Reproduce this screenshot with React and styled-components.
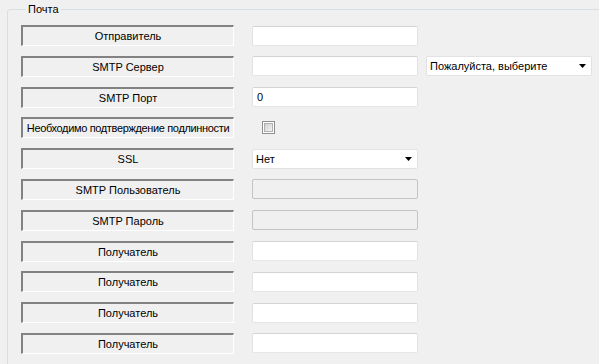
import styled, { createGlobalStyle } from "styled-components";

const GlobalStyle = createGlobalStyle`
  html, body {
    margin: 0;
    background: #f0f0f0;
    overflow: hidden;
  }
  body {
    font-family: "Liberation Sans", Arial, sans-serif;
    font-size: 11px;
    color: #000;
  }
`;

const rows = [
    {label: "Отправитель", field: "text"},
    {label: "SMTP Сервер", field: "text", extra: "Пожалуйста, выберите"},
    {label: "SMTP Порт", field: "text", value: "0"},
    {label: "Необходимо подтверждение подлинности", field: "check", tight: true},
    {label: "SSL", field: "select", value: "Нет"},
    {label: "SMTP Пользователь", field: "disabled"},
    {label: "SMTP Пароль", field: "disabled"},
    {label: "Получатель", field: "text"},
    {label: "Получатель", field: "text"},
    {label: "Получатель", field: "text"},
    {label: "Получатель", field: "text"},
]

function Arrow() {
    return (
        <svg width="7" height="4" viewBox="0 0 7 4">
            <polygon points="0,0 7,0 3.5,4" fill="#000"/>
        </svg>
    )
}

function App() {
    return (
        <>
            <GlobalStyle/>
            <Group>
                <Legend>Почта</Legend>
                <Form>
                    {
                        rows.map((row, i) => {
                            const {label, field, value, extra, tight} = row;
                            return (
                                <Row key={i}>
                                    <Label $tight={tight}>{label}</Label>
                                    {field === "text" && <TextBox>{value}</TextBox>}
                                    {field === "disabled" && <TextBox $disabled/>}
                                    {field === "check" && <CheckBox><span/></CheckBox>}
                                    {field === "select" && (
                                        <Combo>
                                            <span>{value}</span>
                                            <Arrow/>
                                        </Combo>
                                    )}
                                    {extra && (
                                        <Combo $wide>
                                            <span>{extra}</span>
                                            <Arrow/>
                                        </Combo>
                                    )}
                                </Row>
                            )
                        })
                    }
                </Form>
            </Group>
        </>
    );
}

const Group = styled.fieldset`
    box-sizing: border-box;
    width: 620px;
    margin: 3px 0 0 7px;
    padding: 0 0 20px 13px;
    border: 1px solid #d5dfe5;
    border-radius: 3px;
`

const Legend = styled.legend`
    margin-left: 5px;
    padding: 0 2px;
    line-height: 13px;
`

const Form = styled.div`
    display: flex;
    flex-direction: column;
    gap: 9.8px;
    padding-top: 9px;
`

const Row = styled.div`
    display: flex;
    align-items: center;
    height: 21px;
`

const Label = styled.div`
    box-sizing: border-box;
    width: 213px;
    height: 21px;
    margin-right: 18px;
    display: flex;
    align-items: center;
    justify-content: center;
    white-space: nowrap;
    overflow: hidden;
    letter-spacing: ${props => props.$tight ? "-0.35px" : "0"};
    border-top: 2px solid #828282;
    border-left: 2px solid #828282;
    border-right: 1px solid #fff;
    border-bottom: 1px solid #fff;
`

const TextBox = styled.div`
    box-sizing: border-box;
    width: 166px;
    height: 20px;
    padding: 0 4px;
    display: flex;
    align-items: center;
    background: ${props => props.$disabled ? "#f0f0f0" : "#fff"};
    border: 1px solid;
    border-color: ${props => props.$disabled ? "#c4c4c4" : "#d3d3d3 #e2e2e2 #e6e6e6 #e2e2e2"};
    border-radius: 2px;
`

const Combo = styled.div`
    box-sizing: border-box;
    width: 166px;
    height: 20px;
    margin-left: ${props => props.$wide ? "8px" : "0"};
    padding: 0 5px 0 3px;
    display: flex;
    align-items: center;
    justify-content: space-between;
    background: #fff;
    border: 1px solid #e2e2e2;
    border-radius: 2px;
`

const CheckBox = styled.div`
    box-sizing: border-box;
    width: 13px;
    height: 13px;
    margin-left: 10px;
    padding: 1px;
    border: 1px solid #8e8f8f;
    background: #fff;

    span {
        display: block;
        width: 100%;
        height: 100%;
        box-sizing: border-box;
        border: 1px solid #aeb0b3;
        background: linear-gradient(135deg, #cfd0d2, #f4f4f4);
    }
`

export default App;
